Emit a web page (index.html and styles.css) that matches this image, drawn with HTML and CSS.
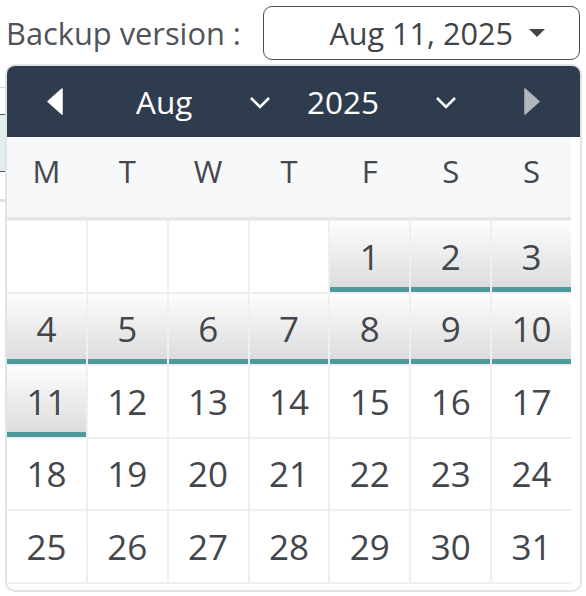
FILE: index.html
```html
<!DOCTYPE html>
<html>
<head>
<meta charset="utf-8">
<link rel="stylesheet" href="styles.css">
</head>
<body>
<div class="top">
  <span class="label">Backup version :</span>
  <button class="picker-btn">
    <span class="picker-value">Aug 11, 2025</span>
    <svg class="caret" width="16" height="8" viewBox="0 0 16 8"><polygon points="0,0 16,0 8,8" fill="#444"/></svg>
  </button>
</div>

<div class="backdrop">
  <div class="bd-row bd-a"></div>
  <div class="bd-row bd-b"></div>
  <div class="bd-row bd-c"></div>
  <div class="bd-row bd-d"></div>
</div>

<div class="popup">
  <div class="cal-head">
    <div class="nav nav-prev">
      <svg width="16" height="27" viewBox="0 0 16 27"><polygon points="15,1 15,26 1,13.5" fill="#fff" stroke="#fff" stroke-width="1.5" stroke-linejoin="round"/></svg>
    </div>
    <div class="sel sel-month">
      <span>Aug</span>
      <svg width="22" height="13" viewBox="0 0 22 13"><polyline points="2,2 11,11 20,2" fill="none" stroke="#fff" stroke-width="2.6"/></svg>
    </div>
    <div class="sel sel-year">
      <span>2025</span>
      <svg width="22" height="13" viewBox="0 0 22 13"><polyline points="2,2 11,11 20,2" fill="none" stroke="#fff" stroke-width="2.6"/></svg>
    </div>
    <div class="nav nav-next">
      <svg width="16" height="27" viewBox="0 0 16 27"><polygon points="1,1 1,26 15,13.5" fill="#b3b7bc" stroke="#b3b7bc" stroke-width="1.5" stroke-linejoin="round"/></svg>
    </div>
  </div>
  <div class="cal-body">
    <div class="weekdays">
      <span>M</span><span>T</span><span>W</span><span>T</span><span>F</span><span>S</span><span>S</span>
    </div>
    <div class="days">
      <span class="day empty"></span><span class="day empty"></span><span class="day empty"></span><span class="day empty"></span>
      <span class="day has">1</span><span class="day has">2</span><span class="day has">3</span>
      <span class="day has">4</span><span class="day has">5</span><span class="day has">6</span><span class="day has">7</span><span class="day has">8</span><span class="day has">9</span><span class="day has">10</span>
      <span class="day has">11</span><span class="day">12</span><span class="day">13</span><span class="day">14</span><span class="day">15</span><span class="day">16</span><span class="day">17</span>
      <span class="day">18</span><span class="day">19</span><span class="day">20</span><span class="day">21</span><span class="day">22</span><span class="day">23</span><span class="day">24</span>
      <span class="day">25</span><span class="day">26</span><span class="day">27</span><span class="day">28</span><span class="day">29</span><span class="day">30</span><span class="day">31</span>
    </div>
  </div>
</div>
</body>
</html>
```

FILE: styles.css
```css
* { box-sizing: border-box; }
html, body { margin: 0; padding: 0; background: #fff; }
body {
  font-family: "Open Sans", "Noto Sans", sans-serif;
  width: 586px;
  height: 596px;
  overflow: hidden;
  position: relative;
}

.top {
  display: flex;
  align-items: center;
  gap: 22px;
  padding: 6px 0 0 6px;
  height: 60px;
}
.label {
  font-size: 30.8px;
  color: #505459;
  line-height: 1;
  white-space: nowrap;
}
.picker-btn {
  flex: 0 0 317px;
  width: 317px;
  height: 54px;
  border: 1.5px solid #4c4f54;
  border-radius: 9px;
  background: #fff;
  display: flex;
  align-items: center;
  justify-content: flex-end;
  gap: 16px;
  padding: 0 34px 0 0;
  font-family: inherit;
}
.picker-value {
  font-size: 30.6px;
  color: #404347;
  line-height: 1;
  white-space: nowrap;
}
.caret { display: block; }

.backdrop {
  margin-top: 27px;
  width: 7px;
}
.bd-row { width: 7px; }
.bd-a { height: 27px; border-top: 1px solid #cfd1d3; }
.bd-b { height: 57px; border-top: 1px solid #55585c; background: #e2eeee; }
.bd-c { height: 28px; border-top: 1px solid #55585c; }
.bd-d { height: 30px; border-top: 3px solid #e0e1e3; }

.popup {
  position: absolute;
  left: 5px;
  top: 64px;
  width: 577px;
  height: 528px;
  border: 2px solid #e1e4e7;
  border-radius: 10px;
  background: #fff;
  overflow: hidden;
}

.cal-head {
  height: 71px;
  background: #2f3c4d;
  display: flex;
  align-items: center;
  color: #fff;
  font-size: 31.5px;
}
.nav { display: flex; align-items: center; }
.nav svg { display: block; }
.nav-prev { width: 96px; justify-content: center; }
.sel {
  display: flex;
  align-items: center;
  justify-content: space-between;
  line-height: 1;
}
.sel svg { display: block; margin-top: 2px; }
.sel-month { margin-left: 33px; width: 135px; }
.sel-year { margin-left: 36px; width: 150px; }
.nav-next { margin-left: 67px; }

.cal-body {
  padding: 0 9px 8px 0;
}
.weekdays {
  display: grid;
  grid-template-columns: repeat(7, 1fr);
  column-gap: 2px;
  height: 83px;
  background: #f7f8fa;
  border-bottom: 3px solid #e4e6e9;
  align-items: center;
  font-size: 31px;
  color: #44474c;
  text-align: center;
}
.weekdays span { padding-bottom: 12px; }

.days {
  display: grid;
  grid-template-columns: repeat(7, 1fr);
  grid-template-rows: repeat(5, 70.5px);
  gap: 2px;
  padding: 1px 0 2px 0;
  background: #eeeff0;
}
.day {
  background: #fff;
  display: flex;
  align-items: center;
  justify-content: center;
  font-size: 35px;
  color: #43464b;
  line-height: 1;
}
.day.has {
  background: linear-gradient(#fdfdfd, #d9dadb);
  box-shadow: inset 0 -5px 0 #4c9a99;
}
```
